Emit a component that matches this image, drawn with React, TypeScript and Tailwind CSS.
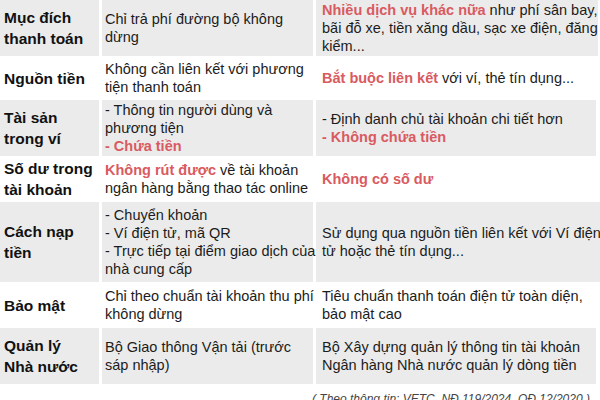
import React from "react";

/* ─── Rows ─────────────────────────────────────────────────────────── */
type Part = { t: string; red?: boolean };
type Line = Part[];

const ROWS: { h: string; head: string[]; mid: Line[]; right: Line[]; gray: boolean }[] = [
  {
    h: "h-[56px]", gray: true,
    head: ["Mục đích", "thanh toán"],
    mid: [[{ t: "Chỉ trả phí đường bộ không" }], [{ t: "dừng" }]],
    right: [
      [{ t: "Nhiều dịch vụ khác nữa", red: true }, { t: " như phí sân bay," }],
      [{ t: "bãi đỗ xe, tiền xăng dầu, sạc xe điện, đăng" }],
      [{ t: "kiểm..." }],
    ],
  },
  {
    h: "h-[40px]", gray: false,
    head: ["Nguồn tiền"],
    mid: [[{ t: "Không cần liên kết với phương" }], [{ t: "tiện thanh toán" }]],
    right: [[{ t: "Bắt buộc liên kết", red: true }, { t: " với ví, thẻ tín dụng..." }]],
  },
  {
    h: "h-[56px]", gray: true,
    head: ["Tài sản", "trong ví"],
    mid: [[{ t: "- Thông tin người dùng và" }], [{ t: "phương tiện" }], [{ t: "- Chứa tiền", red: true }]],
    right: [[{ t: "- Định danh chủ tài khoản chi tiết hơn" }], [{ t: "- Không chứa tiền", red: true }]],
  },
  {
    h: "h-[42px]", gray: false,
    head: ["Số dư trong", "tài khoản"],
    mid: [[{ t: "Không rút được", red: true }, { t: " về tài khoản" }], [{ t: "ngân hàng bằng thao tác online" }]],
    right: [[{ t: "Không có số dư", red: true }]],
  },
  {
    h: "h-[80px]", gray: true,
    head: ["Cách nạp", "tiền"],
    mid: [
      [{ t: "- Chuyển khoản" }],
      [{ t: "- Ví điện tử, mã QR" }],
      [{ t: "- Trực tiếp tại điểm giao dịch của" }],
      [{ t: "nhà cung cấp" }],
    ],
    right: [[{ t: "Sử dụng qua nguồn tiền liên kết với Ví điện" }], [{ t: "tử hoặc thẻ tín dụng..." }]],
  },
  {
    h: "h-[42px]", gray: false,
    head: ["Bảo mật"],
    mid: [[{ t: "Chỉ theo chuẩn tài khoản thu phí" }], [{ t: "không dừng" }]],
    right: [[{ t: "Tiêu chuẩn thanh toán điện tử toàn diện," }], [{ t: "bảo mật cao" }]],
  },
  {
    h: "h-[56px]", gray: true,
    head: ["Quản lý", "Nhà nước"],
    mid: [[{ t: "Bộ Giao thông Vận tải (trước" }], [{ t: "sáp nhập)" }]],
    right: [[{ t: "Bộ Xây dựng quản lý thông tin tài khoản" }], [{ t: "Ngân hàng Nhà nước quản lý dòng tiền" }]],
  },
];

function Lines({ lines }: { lines: Line[] }) {
  return (
    <div className="text-[14.5px] leading-[18px] text-[#1c1c1c]">
      {lines.map((line, i) => (
        <div key={i} className="whitespace-nowrap">
          {line.map((p, j) =>
            p.red ? (
              <span key={j} className="font-bold text-[#d95a60]">{p.t}</span>
            ) : (
              <span key={j}>{p.t}</span>
            )
          )}
        </div>
      ))}
    </div>
  );
}

export default function App() {
  return (
    <div className="w-[600px] h-[400px] overflow-hidden bg-white font-['Liberation_Sans',Arial,sans-serif]">
      <div className="w-[596px] flex flex-col gap-[2px]">
        {ROWS.map((r, i) => {
          const bg = r.gray ? "bg-[#ebebeb]" : "bg-white";
          return (
            <div key={i} className={`grid grid-cols-[99px_211px_1fr] gap-x-[3px] ${r.h}`}>
              <div className={`${bg} flex flex-col justify-center pl-[4px]`}>
                {r.head.map((h, k) => (
                  <div key={k} className="text-[15.5px] leading-[21px] font-bold text-[#111] whitespace-nowrap">{h}</div>
                ))}
              </div>
              <div className={`${bg} flex flex-col justify-center pl-[3px]`}>
                <Lines lines={r.mid} />
              </div>
              <div className={`${bg} flex flex-col justify-center pl-[6px]`}>
                <Lines lines={r.right} />
              </div>
            </div>
          );
        })}
      </div>
      <div className="mt-[6px] pl-[312px] text-[12px] italic text-[#444] whitespace-nowrap">
        ( Theo thông tin: VETC, NĐ 119/2024, QĐ 12/2020 )
      </div>
    </div>
  );
}
